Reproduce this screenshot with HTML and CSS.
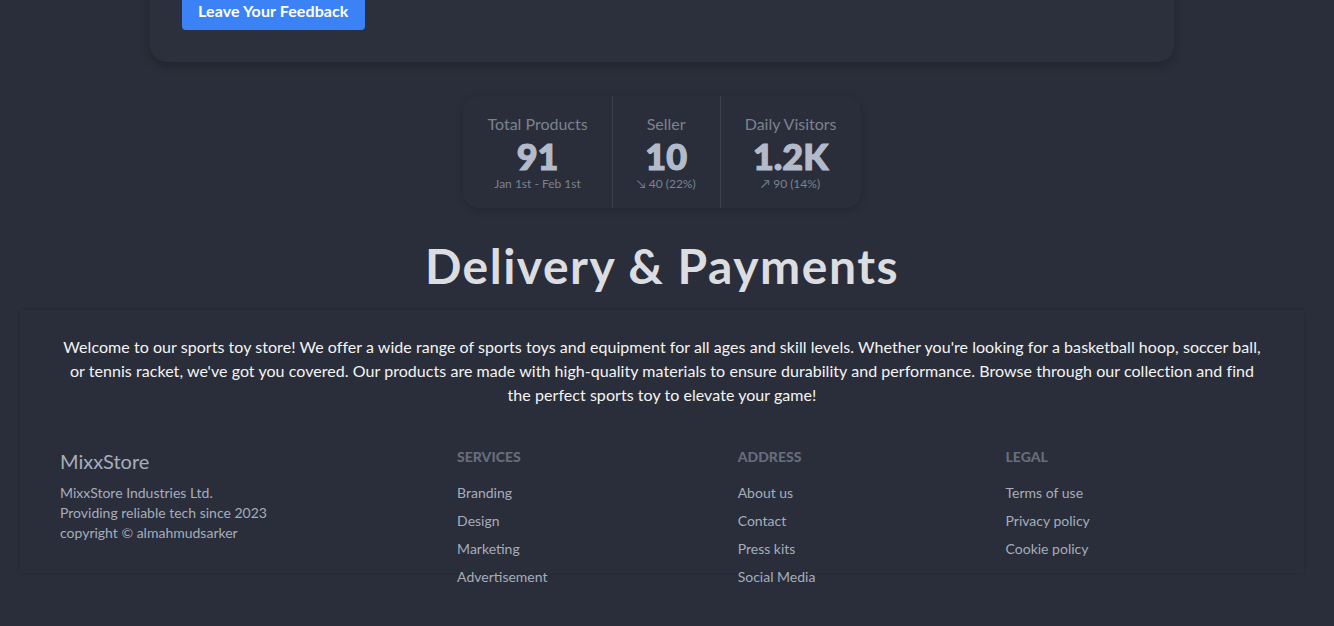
FILE: index.html
```html
<!DOCTYPE html>
<html lang="en">
<head>
<meta charset="utf-8">
<title>MixxStore</title>
<link rel="stylesheet" href="styles.css">
</head>
<body>
<div class="page">
  <section class="feedback-card">
    <button class="btn-primary">Leave Your Feedback</button>
  </section>

  <div class="stats">
    <div class="stat">
      <div class="stat-title">Total Products</div>
      <div class="stat-value">91</div>
      <div class="stat-desc">Jan 1st - Feb 1st</div>
    </div>
    <div class="stat">
      <div class="stat-title">Seller</div>
      <div class="stat-value">10</div>
      <div class="stat-desc">↘︎ 40 (22%)</div>
    </div>
    <div class="stat">
      <div class="stat-title">Daily Visitors</div>
      <div class="stat-value">1.2K</div>
      <div class="stat-desc">↗︎ 90 (14%)</div>
    </div>
  </div>

  <h1 class="heading">Delivery &amp; Payments</h1>

  <section class="info-box">
    <p class="intro">Welcome to our sports toy store! We offer a wide range of sports toys and equipment for all ages and skill levels. Whether you're looking for a basketball hoop, soccer ball, or tennis racket, we've got you covered. Our products are made with high-quality materials to ensure durability and performance. Browse through our collection and find the perfect sports toy to elevate your game!</p>

    <footer class="footer">
      <aside class="brand">
        <p class="brand-name">MixxStore</p>
        <p>MixxStore Industries Ltd.<br>Providing reliable tech since 2023<br>copyright © almahmudsarker</p>
      </aside>
      <nav class="footer-col">
        <span class="footer-title">Services</span>
        <a class="link">Branding</a>
        <a class="link">Design</a>
        <a class="link">Marketing</a>
        <a class="link">Advertisement</a>
      </nav>
      <nav class="footer-col">
        <span class="footer-title">Address</span>
        <a class="link">About us</a>
        <a class="link">Contact</a>
        <a class="link">Press kits</a>
        <a class="link">Social Media</a>
      </nav>
      <nav class="footer-col">
        <span class="footer-title">Legal</span>
        <a class="link">Terms of use</a>
        <a class="link">Privacy policy</a>
        <a class="link">Cookie policy</a>
      </nav>
    </footer>
  </section>
</div>
</body>
</html>
```

FILE: styles.css
```css
* { box-sizing: border-box; }

html, body {
  margin: 0;
  padding: 0;
  background: #2a2e3a;
  height: 100%;
  overflow: hidden;
}

body {
  font-family: Lato, "Noto Sans", sans-serif;
  color: #a6adbb;
}

.page {
  width: 1324px;
  margin-top: -42px;
  display: flex;
  flex-direction: column;
  align-items: center;
}

.feedback-card {
  width: 1024px;
  padding: 32px;
  background: #2b303c;
  border-radius: 16px;
  box-shadow: 0 4px 10px rgba(0, 0, 0, 0.22);
}

.btn-primary {
  height: 40px;
  padding: 0 16px;
  background: #3b82f6;
  color: #ffffff;
  border: none;
  border-radius: 4px;
  font-family: inherit;
  font-size: 16px;
  font-weight: 700;
  letter-spacing: 0.1px;
}

.stats {
  margin-top: 34px;
  display: flex;
  border-radius: 16px;
  box-shadow: 0 2px 8px rgba(0, 0, 0, 0.18);
  background: #2a2e3a;
}

.stat {
  display: flex;
  flex-direction: column;
  align-items: center;
  padding: 16px 24px;
}

.stat + .stat {
  border-left: 1px solid #3b404c;
}

.stat-title {
  font-size: 16px;
  line-height: 24px;
  color: #7c8290;
}

.stat-value {
  font-size: 36px;
  line-height: 40px;
  font-weight: 900;
  color: #b3bbcb;
  -webkit-text-stroke: 1.2px #b3bbcb;
}

.stat-desc {
  font-size: 12px;
  line-height: 16px;
  color: #7c8290;
}

.heading {
  margin: 34px 0 0;
  font-size: 48px;
  line-height: 48px;
  font-weight: 700;
  letter-spacing: 1.5px;
  color: #dcdde1;
}

.info-box {
  margin-top: 20px;
  width: 1284px;
  height: 263px;
  padding: 25px 40px 0;
  box-shadow: 0 0 4px rgba(0, 0, 0, 0.12);
}

.intro {
  margin: 0;
  font-size: 16px;
  line-height: 24px;
  letter-spacing: 0.05px;
  text-align: center;
  color: #f4f4f4;
}

.footer {
  padding-top: 40px;
  display: grid;
  grid-auto-flow: column;
  column-gap: 16px;
  justify-items: start;
  font-size: 14px;
  line-height: 20px;
}

.brand p { margin: 0; }

.brand-name {
  font-size: 20px;
  line-height: 28px;
  color: #a6adbb;
  margin-bottom: 8px !important;
}

.footer-col {
  display: flex;
  flex-direction: column;
  gap: 8px;
}

.footer-title {
  font-weight: 900;
  text-transform: uppercase;
  color: #676d7a;
  margin-bottom: 8px;
}

.link {
  color: #a6adbb;
}
```
